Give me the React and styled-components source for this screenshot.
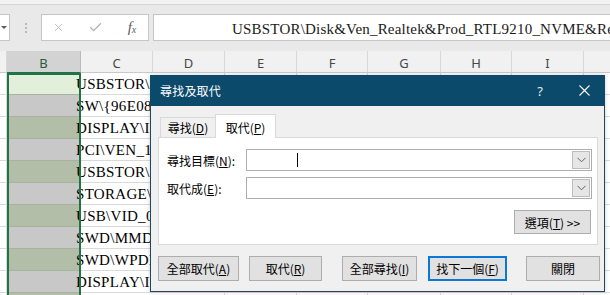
import React from 'react';
import styled, { createGlobalStyle } from 'styled-components';
import { X, Check } from 'lucide-react';

const CJK = `"Noto Sans CJK TC", "Noto Sans", sans-serif`;
const SERIF = `"Liberation Serif", "Noto Sans CJK TC", serif`;

const GlobalStyle = createGlobalStyle`
  html, body {
    margin: 0;
    padding: 0;
    overflow: hidden;
  }
  body {
    background: #e9e9e9;
  }
`;

const COLS = [7, 74, 72, 72, 72, 71, 73, 71, 72, 60];
const LETTERS = ['', 'B', 'C', 'D', 'E', 'F', 'G', 'H', 'I', 'J'];

const ROWS = [
  'USBSTOR\\Disk&Ven_Realtek&Prod_RTL9210_NVME&Rev_1.00',
  'SW\\{96E080C7-143C-11D1-B40F-00A0C9223196}',
  'DISPLAY\\INTEL_HDMI',
  'PCI\\VEN_10EC&DEV_8168',
  'USBSTOR\\Disk&Ven_Generic',
  'STORAGE\\Volume\\_??_USBSTOR',
  'USB\\VID_0BDA&PID_9210',
  'SWD\\MMDEVAPI\\{0.0.0.00000000}',
  'SWD\\WPDBUSENUM\\_??_USBSTOR',
  'DISPLAY\\INTEL_DP',
  'PCI\\VEN_8086&DEV_A370',
];

const bFill = (i) => (i === 0 ? '#e2efda' : i % 2 === 1 ? '#c8c8c8' : '#b3bea8');

function App() {
  return (
    <Page>
      <GlobalStyle />
      <RibbonEdge />
      <FormulaBar>
        <NameBox>
          <Caret />
        </NameBox>
        <Grip>
          <Dot />
          <Dot />
          <Dot />
        </Grip>
        <FxBox>
          <IconSlot>
            <X size={13} strokeWidth={1.3} color="#a8a8a8" />
          </IconSlot>
          <IconSlot>
            <Check size={15} strokeWidth={2.2} color="#b2b2b2" />
          </IconSlot>
          <IconSlot>
            <Fx>
              f<sub>x</sub>
            </Fx>
          </IconSlot>
        </FxBox>
        <FormulaInput>USBSTOR\Disk&amp;Ven_Realtek&amp;Prod_RTL9210_NVME&amp;Rev_1.00\000000001</FormulaInput>
      </FormulaBar>

      <Sheet>
        <HeaderRow>
          {COLS.map((w, i) => (
            <HeaderCell key={i} $w={w} $selected={i === 1}>
              {LETTERS[i]}
            </HeaderCell>
          ))}
        </HeaderRow>
        {ROWS.map((text, r) => (
          <Row key={r}>
            {COLS.map((w, i) => {
              if (i === 1) return <BCell key={i} $w={w} $fill={bFill(r)} />;
              if (i === 2)
                return (
                  <Cell key={i} $w={w} $overflow>
                    <CellText>{text}</CellText>
                  </Cell>
                );
              return <Cell key={i} $w={w} $last={i === COLS.length - 1} />;
            })}
          </Row>
        ))}
        <Selection />
      </Sheet>

      <Dialog>
        <TitleBar>
          <Title>尋找及取代</Title>
          <TitleButton $w={46}>?</TitleButton>
          <TitleButton $w={42}>
            <svg width="11" height="11" viewBox="0 0 11 11">
              <path d="M0.5 0.5 L10.5 10.5 M10.5 0.5 L0.5 10.5" stroke="#fff" strokeWidth="1.1" />
            </svg>
          </TitleButton>
        </TitleBar>

        <Body>
          <TabStrip>
            <Tab>
              尋找(<u>D</u>)
            </Tab>
            <Tab $active>
              取代(<u>P</u>)
            </Tab>
          </TabStrip>
          <Panel>
            <FieldRow>
              <Label>
                尋找目標(<u>N</u>):
              </Label>
              <Combo>
                <TextCursor />
                <DropButton>
                  <Chevron />
                </DropButton>
              </Combo>
            </FieldRow>
            <FieldRow $gap>
              <Label>
                取代成(<u>E</u>):
              </Label>
              <Combo>
                <DropButton>
                  <Chevron />
                </DropButton>
              </Combo>
            </FieldRow>
            <OptionsRow>
              <DlgButton $w={77} $h={24}>
                選項(<u>T</u>)&nbsp;&gt;&gt;
              </DlgButton>
            </OptionsRow>
          </Panel>

          <ButtonRow>
            <DlgButton $w={81}>
              全部取代(<u>A</u>)
            </DlgButton>
            <DlgButton $w={73} $ml={10}>
              取代(<u>R</u>)
            </DlgButton>
            <DlgButton $w={75} $ml={20}>
              全部尋找(<u>I</u>)
            </DlgButton>
            <DlgButton $w={79} $ml={11} $primary>
              找下一個(<u>F</u>)
            </DlgButton>
            <DlgButton $w={74} $ml={19}>
              關閉
            </DlgButton>
          </ButtonRow>
        </Body>
      </Dialog>
    </Page>
  );
}

function Chevron() {
  return (
    <svg width="9" height="6" viewBox="0 0 9 6">
      <polyline points="0.5,0.8 4.5,4.8 8.5,0.8" fill="none" stroke="#606060" strokeWidth="1" />
    </svg>
  );
}

const Page = styled.div`
  position: relative;
  width: 610px;
  height: 295px;
  overflow: hidden;
  display: flex;
  flex-direction: column;
  background: #e9e9e9;
`;

const RibbonEdge = styled.div`
  flex-shrink: 0;
  height: 4px;
  background: #f3f3f3;
  border-bottom: 1px solid #d6d6d6;
`;

const FormulaBar = styled.div`
  flex-shrink: 0;
  box-sizing: border-box;
  height: 46px;
  padding-top: 9px;
  display: flex;
  align-items: flex-start;
`;

const NameBox = styled.div`
  box-sizing: border-box;
  width: 10px;
  height: 27px;
  background: #fff;
  border: 1px solid #c6c6c6;
  border-left: none;
  display: flex;
  align-items: center;
  padding-left: 1px;
`;

const Caret = styled.span`
  width: 0;
  height: 0;
  border-left: 3px solid transparent;
  border-right: 3px solid transparent;
  border-top: 3px solid #5c5c5c;
`;

const Grip = styled.div`
  width: 31px;
  height: 27px;
  display: flex;
  flex-direction: column;
  align-items: center;
  justify-content: center;
  gap: 2px;
`;

const Dot = styled.span`
  width: 2px;
  height: 2px;
  background: #b8b8b8;
`;

const FxBox = styled.div`
  box-sizing: border-box;
  width: 108px;
  height: 27px;
  background: #fff;
  border: 1px solid #c6c6c6;
  display: flex;
  align-items: center;
  padding-left: 6px;
  gap: 17px;
`;

const IconSlot = styled.span`
  width: 20px;
  display: flex;
  align-items: center;
  justify-content: center;
`;

const Fx = styled.span`
  font-family: ${SERIF};
  font-style: italic;
  font-size: 15px;
  color: #5e5e5e;
  line-height: 1;

  sub {
    font-size: 10px;
    vertical-align: -1px;
  }
`;

const FormulaInput = styled.div`
  box-sizing: border-box;
  flex: 1;
  margin-left: 4px;
  height: 27px;
  background: #fff;
  border: 1px solid #c6c6c6;
  border-right: none;
  padding: 3px 0 0 78px;
  display: flex;
  align-items: center;
  white-space: nowrap;
  overflow: hidden;
  font-family: ${SERIF};
  font-size: 15px;
  letter-spacing: 0.2px;
  color: #1a1a1a;
`;

const Sheet = styled.div`
  position: relative;
  flex: 1;
  background: #fff;
  display: flex;
  flex-direction: column;
`;

const HeaderRow = styled.div`
  flex-shrink: 0;
  height: 22px;
  display: flex;
  background: #f1f1f1;
  box-sizing: border-box;
  border-bottom: 1px solid #c8c8c8;
`;

const HeaderCell = styled.div`
  box-sizing: border-box;
  flex-shrink: 0;
  width: ${(p) => p.$w}px;
  height: 22px;
  margin-bottom: -1px;
  display: flex;
  align-items: center;
  justify-content: center;
  padding-top: 2px;
  font-family: 'Noto Sans', 'Liberation Sans', sans-serif;
  font-size: 13px;
  color: ${(p) => (p.$selected ? '#285c3b' : '#474747')};
  background: ${(p) => (p.$selected ? '#d3d3d3' : 'transparent')};
  border-right: 1px solid ${(p) => (p.$selected ? '#b9b9b9' : '#d8d8d8')};
  border-bottom: 1px solid ${(p) => (p.$selected ? '#217346' : '#c8c8c8')};
`;

const Row = styled.div`
  flex-shrink: 0;
  height: 22px;
  display: flex;
`;

const Cell = styled.div`
  box-sizing: border-box;
  flex-shrink: 0;
  width: ${(p) => p.$w}px;
  height: 22px;
  border-bottom: 1px solid #d9d9d9;
  border-right: ${(p) => (p.$overflow || p.$last ? 'none' : '1px solid #d9d9d9')};
  display: flex;
  align-items: flex-end;
  overflow: visible;
  white-space: nowrap;
`;

const BCell = styled.div`
  box-sizing: border-box;
  flex-shrink: 0;
  width: ${(p) => p.$w}px;
  height: 22px;
  background: ${(p) => p.$fill};
  border-bottom: 1px solid #a9b2a0;
`;

const CellText = styled.span`
  margin-left: -5px;
  padding-bottom: 1px;
  font-family: ${SERIF};
  font-size: 15px;
  line-height: 18px;
  letter-spacing: 0.3px;
  color: #000;
`;

const Selection = styled.div`
  position: absolute;
  left: 7px;
  top: 22px;
  width: 74px;
  height: 300px;
  box-sizing: border-box;
  border: 2px solid #217346;
  border-bottom: none;
  pointer-events: none;
`;

const Dialog = styled.div`
  position: absolute;
  left: 150px;
  top: 75px;
  width: 455px;
  height: 217px;
  box-sizing: border-box;
  border: 1px solid #22465c;
  border-top: none;
  background: #f0f0f0;
  display: flex;
  flex-direction: column;
  font-family: ${CJK};
  font-size: 12px;
  color: #000;
  box-shadow: 0 0 4px rgba(0, 0, 0, 0.2);
  z-index: 5;
`;

const TitleBar = styled.div`
  flex-shrink: 0;
  height: 31px;
  margin: 0 -1px;
  padding-left: 10px;
  background: #0b4a6b;
  color: #fff;
  display: flex;
  align-items: center;
`;

const Title = styled.span`
  flex: 1;
  font-size: 12px;
  letter-spacing: 0.2px;
`;

const TitleButton = styled.span`
  width: ${(p) => p.$w}px;
  height: 31px;
  display: flex;
  align-items: center;
  justify-content: center;
  font-family: 'Noto Sans', sans-serif;
  font-size: 13px;
  color: #e4ecf1;
`;

const Body = styled.div`
  flex: 1;
  padding: 0 6px 0 7px;
  display: flex;
  flex-direction: column;
`;

const TabStrip = styled.div`
  margin-top: 8px;
  height: 23px;
  padding-left: 2px;
  display: flex;
  align-items: flex-end;
`;

const Tab = styled.div`
  position: relative;
  box-sizing: border-box;
  width: ${(p) => (p.$active ? 61 : 55)}px;
  height: ${(p) => (p.$active ? 24 : 20)}px;
  margin-bottom: ${(p) => (p.$active ? -1 : 0)}px;
  background: ${(p) => (p.$active ? '#fff' : '#f0f0f0')};
  border: 1px solid #d9d9d9;
  border-bottom: none;
  border-right: ${(p) => (p.$active ? '1px solid #d9d9d9' : 'none')};
  display: flex;
  align-items: center;
  justify-content: center;
  padding-top: ${(p) => (p.$active ? 2 : 0)}px;
  z-index: ${(p) => (p.$active ? 1 : 0)};
  font-size: 12px;
`;

const Panel = styled.div`
  box-sizing: border-box;
  height: 108px;
  background: #fff;
  border: 1px solid #d9d9d9;
  padding: 11px 5px 0 8px;
  display: flex;
  flex-direction: column;
`;

const FieldRow = styled.div`
  height: 22px;
  margin-top: ${(p) => (p.$gap ? 6 : 0)}px;
  display: flex;
  align-items: center;
`;

const Label = styled.span`
  width: 79px;
  flex-shrink: 0;
  font-size: 12px;
`;

const Combo = styled.div`
  box-sizing: border-box;
  flex: 1;
  height: 22px;
  background: #fff;
  border: 1px solid #adadad;
  display: flex;
  align-items: stretch;
  justify-content: flex-end;
`;

const TextCursor = styled.span`
  align-self: center;
  width: 1px;
  height: 14px;
  margin-left: 50px;
  margin-right: auto;
  background: #000;
`;

const DropButton = styled.span`
  box-sizing: border-box;
  width: 18px;
  margin: 1px;
  background: #e6e6e6;
  border: 1px solid #bcbcbc;
  display: flex;
  align-items: center;
  justify-content: center;
`;

const OptionsRow = styled.div`
  margin-top: 11px;
  padding-right: 1px;
  display: flex;
  justify-content: flex-end;
`;

const ButtonRow = styled.div`
  margin-top: 11px;
  display: flex;
`;

const DlgButton = styled.span`
  box-sizing: border-box;
  flex-shrink: 0;
  width: ${(p) => p.$w}px;
  height: ${(p) => p.$h || 25}px;
  margin-left: ${(p) => p.$ml || 0}px;
  background: #e1e1e1;
  border: ${(p) => (p.$primary ? '2px solid #0a78d4' : '1px solid #adadad')};
  display: flex;
  align-items: center;
  justify-content: center;
  font-size: 12px;
  white-space: nowrap;

  u {
    text-underline-offset: 1px;
  }
`;

export default App;
